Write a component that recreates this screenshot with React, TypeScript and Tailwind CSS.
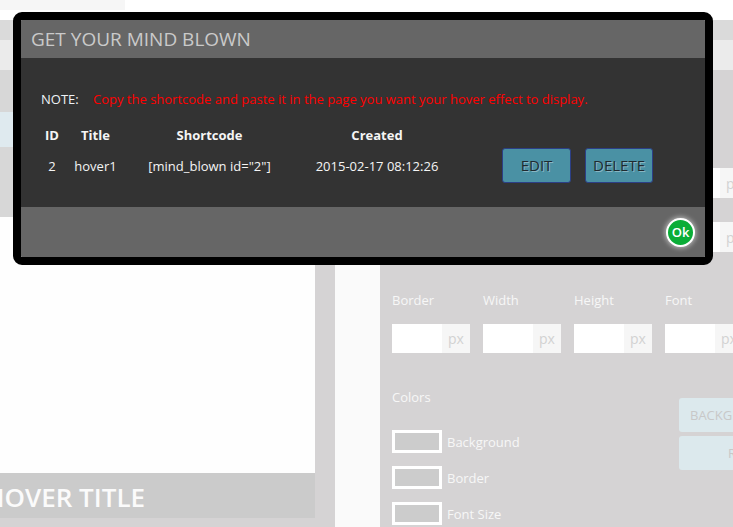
import React from "react";

type Row = {
    id: number;
    title: string;
    shortcode: string;
    created: string;
};

const rows: Row[] = [
    { id: 2, title: "hover1", shortcode: '[mind_blown id="2"]', created: "2015-02-17 08:12:26" },
];

function PxInput({ height = 29 }: { height?: number }) {
    return (
        <div className={"flex w-[78px] shrink-0 " + (height === 30 ? "h-[30px]" : "h-[29px]")}>
            <div className="w-[50px] shrink-0 bg-white"></div>
            <div className="w-[28px] shrink-0 bg-[#f6f6f6] text-[14px] flex items-center justify-center text-[#d2d2d2]">px</div>
        </div>
    );
}

function Swatch({ label }: { label: string }) {
    return (
        <div className="flex items-center h-[23px]">
            <div className="w-[50px] h-[23px] bg-white p-[3px]">
                <div className="w-full h-full bg-[#cccccc]"></div>
            </div>
            <span className="ml-[5px] pt-[2px] text-[13px] text-[#f7f7f7]">{label}</span>
        </div>
    );
}

function Background() {
    return (
        <div className="flex flex-col h-full">
            <div className="h-[20px]">
                <div className="w-[125px] h-[10px] bg-[#f6f6f6]"></div>
            </div>
            <div className="h-[20px] bg-[#dadada]"></div>
            <div className="h-[30px] bg-[#ebebeb]"></div>
            <div className="flex flex-1">
                {/* preview side */}
                <div className="w-[335px] bg-[#d5d3d4] pr-[20px] flex flex-col">
                    <div className="h-[42px] bg-[#d7d7d7]"></div>
                    <div className="h-[35px] bg-[#dfeaef]"></div>
                    <div className="h-[70px] bg-[#d7d7d7]"></div>
                    <div className="h-[256px] bg-[#fefefe]"></div>
                    <div className="h-[45px] bg-[#cbcbcb] overflow-hidden">
                        <span className="block -ml-[15px] pt-[3px] text-[26px] leading-[42px] font-semibold text-[#fbfbfb] whitespace-nowrap">
                            HOVER TITLE
                        </span>
                    </div>
                </div>
                <div className="w-[45px] bg-[#fafafa]"></div>
                {/* settings side */}
                <div className="flex-1 bg-[#d5d3d4] pl-[12px] pt-[98px] flex flex-col items-start overflow-hidden">
                    <div className="ml-[278px]">
                        <PxInput height={30} />
                    </div>
                    <div className="ml-[278px] mt-[24px]">
                        <PxInput height={30} />
                    </div>

                    <div className="flex gap-[13px] mt-[38px] text-[13px] leading-[20px] text-[#f7f7f7]">
                        <div className="w-[78px] shrink-0">Border</div>
                        <div className="w-[78px] shrink-0">Width</div>
                        <div className="w-[78px] shrink-0">Height</div>
                        <div className="w-[78px] shrink-0">Font</div>
                    </div>
                    <div className="flex gap-[13px] mt-[14px]">
                        <PxInput />
                        <PxInput />
                        <PxInput />
                        <PxInput />
                    </div>

                    <div className="flex mt-[34px]">
                        <div className="w-[287px] shrink-0 flex flex-col">
                            <div className="text-[13px] leading-[20px] text-[#f7f7f7]">Colors</div>
                            <div className="mt-[23px] flex flex-col gap-[13px]">
                                <Swatch label="Background" />
                                <Swatch label="Border" />
                                <Swatch label="Font Size" />
                            </div>
                        </div>
                        <div className="mt-[11px] flex flex-col gap-[4px] shrink-0">
                            <div className="w-[120px] h-[34px] rounded-[3px] bg-[#dce9ed] pl-[11px] text-[13px] leading-[34px] text-[#c8c8c8] whitespace-nowrap">
                                BACKGROUND
                            </div>
                            <div className="w-[120px] h-[34px] rounded-[3px] bg-[#dce9ed] pl-[49px] text-[13px] leading-[34px] text-[#c8c8c8] whitespace-nowrap">
                                RESET
                            </div>
                        </div>
                    </div>
                </div>
            </div>
        </div>
    );
}

function ShortcodeModal() {
    return (
        <div className="absolute left-[13px] top-[12px] w-[700px] h-[253px] border-[8px] border-black rounded-[9px] flex flex-col overflow-hidden">
            <div className="h-[38px] bg-[#666666] pl-[10px] flex items-center">
                <h2 className="text-[19px] text-[#cacaca]">GET YOUR MIND BLOWN</h2>
            </div>

            <div className="flex-1 bg-[#333333] pt-[32px]">
                <div className="flex items-center h-[20px] pl-[20px] text-[13px]">
                    <span className="w-[52px] text-[#eef2f6]">NOTE:</span>
                    <span className="text-[#ff0000]">Copy the shortcode and paste it in the page you want your hover effect to display.</span>
                </div>

                <div className="mt-[16px] ml-[15px] text-[13px] text-[#f5f5f5]">
                    <div className="flex items-center h-[20px] font-bold">
                        <div className="w-[32px] text-center">ID</div>
                        <div className="w-[55px] text-center">Title</div>
                        <div className="w-[173px] text-center">Shortcode</div>
                        <div className="w-[162px] text-center">Created</div>
                    </div>
                    {rows.map((item) => (
                        <div key={item.id} className="flex items-center h-[35px] mt-[2px]">
                            <div className="w-[32px] text-center pt-[2px]">{item.id}</div>
                            <div className="w-[55px] text-center pt-[2px]">{item.title}</div>
                            <div className="w-[173px] text-center pt-[2px]">{item.shortcode}</div>
                            <div className="w-[162px] text-center pt-[2px]">{item.created}</div>
                            <button
                                type="button"
                                className="ml-[44px] w-[69px] h-[35px] rounded-[3px] border border-[#2c3f86] bg-[#4a91a4] text-[15px] text-[#1f2a30] [text-shadow:1px_1px_0_rgba(255,255,255,0.35)]"
                            >
                                EDIT
                            </button>
                            <button
                                type="button"
                                className="ml-[14px] w-[68px] h-[35px] rounded-[3px] border border-[#2c3f86] bg-[#4a91a4] text-[15px] text-[#1f2a30] [text-shadow:1px_1px_0_rgba(255,255,255,0.35)]"
                            >
                                DELETE
                            </button>
                        </div>
                    ))}
                </div>
            </div>

            <div className="h-[50px] bg-[#666666] flex items-center justify-end pr-[10px]">
                <button
                    type="button"
                    className="w-[29px] h-[29px] rounded-full border-2 border-white bg-[#0aad37] text-[13px] font-semibold text-white leading-none flex items-center justify-center shadow-[0_0_5px_1px_rgba(255,255,255,0.55)]"
                >
                    Ok
                </button>
            </div>
        </div>
    );
}

export default function App() {
    return (
        <div className="relative w-[733px] h-[527px] overflow-hidden bg-white font-['Open_Sans',sans-serif]">
            <Background />
            <ShortcodeModal />
        </div>
    );
}
